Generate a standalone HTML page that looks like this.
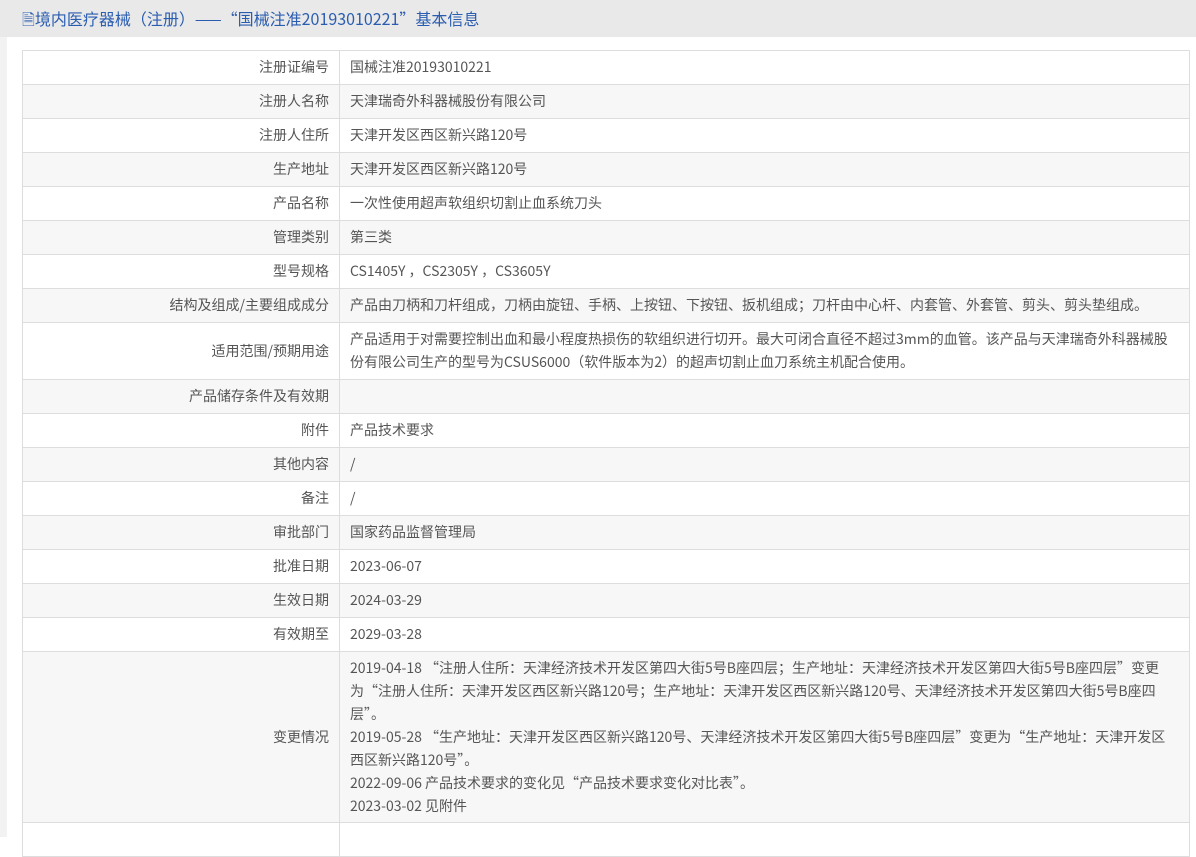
<!DOCTYPE html>
<html><head><meta charset="utf-8"><style>
html,body{margin:0;padding:0;width:1196px;height:835px;overflow:hidden;background:#fff;font-family:"Noto Sans CJK SC","Liberation Sans",sans-serif;}
.hd{position:absolute;left:0;top:0;width:1196px;height:37px;background:#e9e9e9;color:#2a5db0;font-size:16px;line-height:37px;}
.hd span{position:absolute;left:22px;top:0;}
.side{position:absolute;left:0;top:37px;width:7px;height:800px;background:#f2f2f2;}
.panel{position:absolute;left:7px;top:37px;width:1189px;height:800px;background:#fff;}
table{position:absolute;left:15px;top:13px;width:1168px;border-collapse:collapse;font-size:14px;color:#555;table-layout:fixed;}
td{border:1px solid #ddd;height:33px;padding:0 10px;line-height:23px;}
td.l{width:296px;text-align:right;}
tr:nth-child(even) td{background:#f7f7f7;}
td.m{padding:4px 10px 4px 10px;}
</style></head><body>
<div class="hd"><span>🗎境内医疗器械（注册）——“国械注准20193010221”基本信息</span></div>
<div class="side"></div>
<div class="panel"><table>
<tr><td class="l">注册证编号</td><td>国械注准20193010221</td></tr>
<tr><td class="l">注册人名称</td><td>天津瑞奇外科器械股份有限公司</td></tr>
<tr><td class="l">注册人住所</td><td>天津开发区西区新兴路120号</td></tr>
<tr><td class="l">生产地址</td><td>天津开发区西区新兴路120号</td></tr>
<tr><td class="l">产品名称</td><td>一次性使用超声软组织切割止血系统刀头</td></tr>
<tr><td class="l">管理类别</td><td>第三类</td></tr>
<tr><td class="l">型号规格</td><td>CS1405Y ，CS2305Y ，CS3605Y</td></tr>
<tr><td class="l">结构及组成/主要组成成分</td><td>产品由刀柄和刀杆组成，刀柄由旋钮、手柄、上按钮、下按钮、扳机组成；刀杆由中心杆、内套管、外套管、剪头、剪头垫组成。</td></tr>
<tr><td class="l">适用范围/预期用途</td><td class="m" style="height:48px">产品适用于对需要控制出血和最小程度热损伤的软组织进行切开。最大可闭合直径不超过3mm的血管。该产品与天津瑞奇外科器械股<br>份有限公司生产的型号为CSUS6000（软件版本为2）的超声切割止血刀系统主机配合使用。</td></tr>
<tr><td class="l">产品储存条件及有效期</td><td></td></tr>
<tr><td class="l">附件</td><td>产品技术要求</td></tr>
<tr><td class="l">其他内容</td><td>/</td></tr>
<tr><td class="l">备注</td><td>/</td></tr>
<tr><td class="l">审批部门</td><td>国家药品监督管理局</td></tr>
<tr><td class="l">批准日期</td><td>2023-06-07</td></tr>
<tr><td class="l">生效日期</td><td>2024-03-29</td></tr>
<tr><td class="l">有效期至</td><td>2029-03-28</td></tr>
<tr><td class="l">变更情况</td><td class="m" style="height:162px">2019-04-18 “注册人住所：天津经济技术开发区第四大街5号B座四层；生产地址：天津经济技术开发区第四大街5号B座四层”变更<br>为“注册人住所：天津开发区西区新兴路120号；生产地址：天津开发区西区新兴路120号、天津经济技术开发区第四大街5号B座四<br>层”。<br>2019-05-28 “生产地址：天津开发区西区新兴路120号、天津经济技术开发区第四大街5号B座四层”变更为“生产地址：天津开发区<br>西区新兴路120号”。<br>2022-09-06 产品技术要求的变化见“产品技术要求变化对比表”。<br>2023-03-02 见附件</td></tr>
<tr><td class="l"></td><td></td></tr>
</table></div>
</body></html>
